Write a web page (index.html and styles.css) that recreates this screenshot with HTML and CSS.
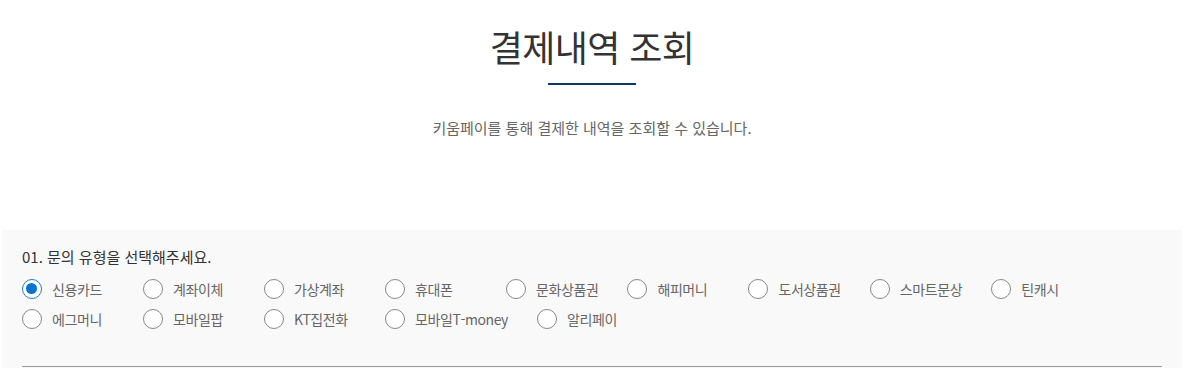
FILE: index.html
```html
<!DOCTYPE html>
<html lang="ko">
<head>
<meta charset="utf-8">
<title>결제내역 조회</title>
<link rel="stylesheet" href="styles.css">
</head>
<body>
<div class="page">
  <header class="head">
    <h1 class="title">결제내역 조회</h1>
    <div class="bar"></div>
    <p class="desc">키움페이를 통해 결제한 내역을 조회할 수 있습니다.</p>
  </header>
  <section class="box">
    <h2 class="q">01. 문의 유형을 선택해주세요.</h2>
    <div class="opts">
      <label class="opt"><span class="radio on"></span><span class="txt">신용카드</span></label>
      <label class="opt"><span class="radio"></span><span class="txt">계좌이체</span></label>
      <label class="opt"><span class="radio"></span><span class="txt">가상계좌</span></label>
      <label class="opt"><span class="radio"></span><span class="txt">휴대폰</span></label>
      <label class="opt"><span class="radio"></span><span class="txt">문화상품권</span></label>
      <label class="opt"><span class="radio"></span><span class="txt">해피머니</span></label>
      <label class="opt"><span class="radio"></span><span class="txt">도서상품권</span></label>
      <label class="opt"><span class="radio"></span><span class="txt">스마트문상</span></label>
      <label class="opt"><span class="radio"></span><span class="txt">틴캐시</span></label>
      <label class="opt"><span class="radio"></span><span class="txt">에그머니</span></label>
      <label class="opt"><span class="radio"></span><span class="txt">모바일팝</span></label>
      <label class="opt"><span class="radio"></span><span class="txt">KT집전화</span></label>
      <label class="opt"><span class="radio"></span><span class="txt">모바일T-money</span></label>
      <label class="opt"><span class="radio"></span><span class="txt">알리페이</span></label>
    </div>
    <div class="line"></div>
  </section>
</div>
</body>
</html>
```
FILE: styles.css
```css
* { box-sizing: border-box; }
html, body { margin: 0; padding: 0; background: #fff; }
body {
  font-family: "Noto Sans CJK KR", "Noto Sans", sans-serif;
  color: #333;
}
.page { width: 1180px; margin: 0 auto; }
.head { text-align: center; padding-top: 22px; height: 230px; }
.title {
  margin: 0;
  font-size: 36px;
  line-height: 48px;
  font-weight: 400;
  color: #333;
  letter-spacing: -0.6px;
}
.bar {
  width: 88px;
  height: 2px;
  background: #0d3766;
  margin: 13px auto 0;
}
.desc {
  margin: 32px 0 0;
  font-size: 15px;
  line-height: 22px;
  color: #666;
  font-weight: 400;
}
.box {
  background: #f9f9f9;
  padding: 15px 20px 0 20px;
  height: 138px;
}
.q {
  margin: 0;
  font-size: 15px;
  line-height: 24px;
  font-weight: 400;
  color: #333;
}
.opts {
  display: flex;
  flex-wrap: wrap;
  margin-top: 5px;
}
.opt {
  display: flex;
  align-items: center;
  width: 92px;
  min-width: max-content;
  margin-right: 29px;
  height: 30px;
}
.radio {
  width: 20px;
  height: 20px;
  border: 1.5px solid #888;
  border-radius: 50%;
  background: #fff;
  flex: none;
  position: relative;
}
.radio.on { border-color: #1a7fd4; }
.radio.on::after {
  content: "";
  position: absolute;
  left: 3px; top: 3px;
  width: 11px; height: 11px;
  border-radius: 50%;
  background: #0a73d0;
}
.txt {
  margin-left: 10px;
  font-size: 14px;
  color: #666;
  white-space: nowrap;
  letter-spacing: -0.4px;
}
.line {
  margin-top: 32px;
  height: 1px;
  background: #999;
  width: 1140px;
}
```
